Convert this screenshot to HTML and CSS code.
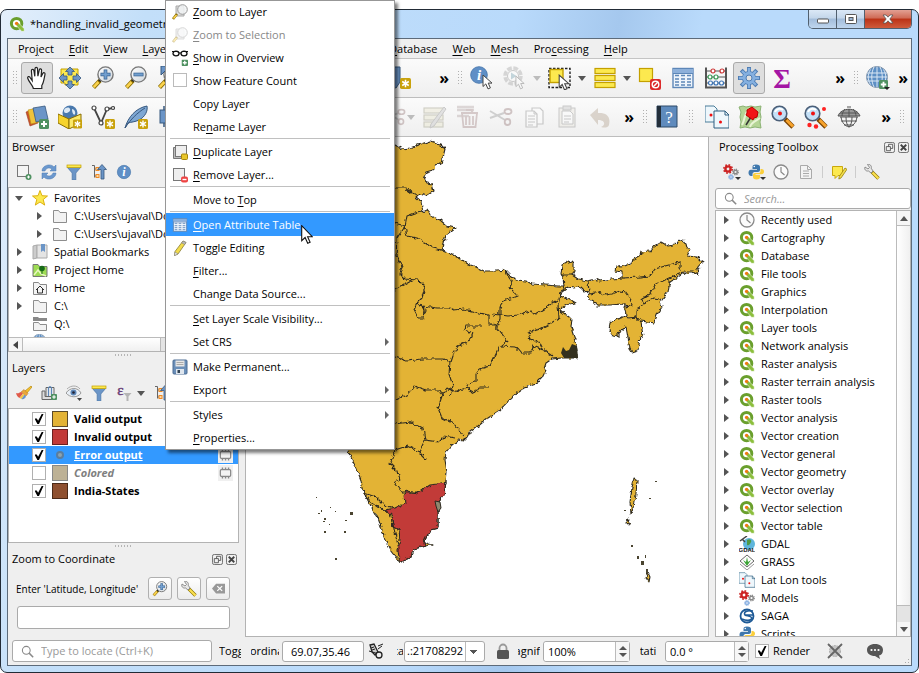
FILE: index.html
```html
<!DOCTYPE html>
<html lang="en">
<head>
<meta charset="utf-8">
<title>*handling_invalid_geometries - QGIS</title>
<link rel="stylesheet" href="styles.css">
</head>
<body>
<svg class="defs" aria-hidden="true">
  <defs>
    <linearGradient id="lens" x1="0" y1="0" x2="1" y2="1"><stop offset="0" stop-color="#fff"/><stop offset="1" stop-color="#cfd6dc"/></linearGradient>
    <filter id="coast" x="-5%" y="-5%" width="110%" height="110%">
      <feTurbulence type="fractalNoise" baseFrequency="0.22" numOctaves="2" seed="4" result="n"/>
      <feDisplacementMap in="SourceGraphic" in2="n" scale="5" xChannelSelector="R" yChannelSelector="G"/>
    </filter>
    <symbol id="q" viewBox="0 0 16 16"><circle cx="7.6" cy="7.6" r="5.2" fill="#fff" stroke="#6a9f2d" stroke-width="3"/><path d="M7.4 6.600l2.200.3 5.600 5.800v2.600h-2.600L7.200 9.400z" fill="#8cbf3d" stroke="#fff" stroke-width=".5"/><circle cx="7.600" cy="7.400" r="1.700" fill="#ee7913"/></symbol>
    <symbol id="newbadge" viewBox="0 0 10 10"><rect width="10" height="10" rx="1.5" fill="#c9a20c"/><path d="M5 1.5v7M2 3.2l6 3.6M8 3.2L2 6.8" stroke="#fff" stroke-width="1.4"/></symbol>
    <symbol id="plusbadge" viewBox="0 0 10 10"><rect width="10" height="10" rx="1.5" fill="#4f9161"/><path d="M5 2v6M2 5h6" stroke="#fff" stroke-width="2"/></symbol>
    <symbol id="arrowcur" viewBox="0 0 12 16"><path d="M1 1v11.5l2.8-2.6 2.2 5 2.4-1-2.2-4.8h3.8z" fill="#fff" stroke="#444" stroke-width="1"/></symbol>

    <symbol id="hand" viewBox="0 0 24 24"><path d="M8.3 22.5c0-2.4-4.5-6.6-5.600-10.200-.5-1.700 1.400-2.400 2.300-1l2.200 3.200-.8-9.700c0-1.800 2.200-1.900 2.500-.2l.9 5.700L10 2.600c.1-1.700 2.400-1.700 2.500 0l.4 7.500 1.400-6.200c.4-1.600 2.500-1.200 2.300.5l-.6 6.700 1.800-3.700c.8-1.300 2.500-.6 2.200.9-.8 3.500-1.200 8.700-3.200 11.200v3z" fill="#fff" stroke="#222" stroke-width="1.200"/></symbol>
    <symbol id="pan" viewBox="0 0 24 24"><path d="M3 3h17v16H7v-2H3z" fill="#fce94f" stroke="#c4a000"/><g fill="#6b95c7" stroke="#37587f" stroke-width=".8"><path d="M12 1l4.500 4.500H14V9h-4V5.500H7.500z"/><path d="M12 23l4.500-4.500H14V15h-4v3.500H7.500z"/><path d="M1 12l4.500-4.500V10H9v4H5.500v2.500z"/><path d="M23 12l-4.500-4.500V10H15v4h3.500v2.500z"/></g></symbol>
    <symbol id="mag" viewBox="0 0 24 24"><path d="M9 14.500L2.500 21.500" stroke="#8a6d00" stroke-width="4.200"/><path d="M7.500 16l-4.800 5.200" stroke="#fbd34d" stroke-width="2.600"/><path d="M10.500 12.500l-2.200 2.600" stroke="#222" stroke-width="3"/><circle cx="14.500" cy="8.500" r="7.600" fill="url(#lens)" stroke="#777" stroke-width="1.400"/></symbol>
    <symbol id="zoomin" viewBox="0 0 24 24"><use href="#mag"/><path d="M14.500 3.500v10M9.500 8.500h10" stroke="#36608f" stroke-width="3.600"/><path d="M14.500 4.200v8.600M10.200 8.500h8.600" stroke="#729fcf" stroke-width="2.200"/></symbol>
    <symbol id="zoomout" viewBox="0 0 24 24"><use href="#mag"/><path d="M9.500 8.500h10" stroke="#36608f" stroke-width="3.600"/><path d="M10.200 8.500h8.600" stroke="#729fcf" stroke-width="2.200"/></symbol>
    <symbol id="zoomfull" viewBox="0 0 24 24"><use href="#mag"/><path d="M4 0h7v5H8l-4 4z" fill="#6b95c7" stroke="#37587f"/></symbol>
    <symbol id="newpoly" viewBox="0 0 24 24"><path d="M-1 1h13v15l-4 6-9-3z" fill="#6b95c7" stroke="#37587f"/><use href="#newbadge" x="12" y="12" width="11" height="11"/></symbol>
    <symbol id="info" viewBox="0 0 24 24"><circle cx="12" cy="12" r="10" fill="#5f8fc6" stroke="#4a78ac"/><text x="12" y="18.500" class="gi">i</text></symbol>
    <symbol id="identify" viewBox="0 0 24 24"><use href="#info" width="20" height="20" x="-1" y="-1"/><use href="#arrowcur" x="12" y="8" width="12" height="16"/></symbol>
    <symbol id="action" viewBox="0 0 24 24"><circle cx="10" cy="10" r="8" fill="#eee" stroke="#999" stroke-width="3.500" stroke-dasharray="4.700 1.600"/><circle cx="10" cy="10" r="5.500" fill="#fff" stroke="#777"/><path d="M8 6.500l5.500 3.500L8 13.500z" fill="#69a"/><use href="#arrowcur" x="12" y="9" width="11" height="15"/></symbol>
    <symbol id="select" viewBox="0 0 24 24"><rect x="1" y="2.500" width="21" height="19" fill="none" stroke="#222" stroke-width="1.400" stroke-dasharray="2.500 1.500"/><rect x="2" y="3.500" width="13" height="13" fill="#fce94f" stroke="#c4a000" stroke-width="1.400"/><use href="#arrowcur" x="10" y="8" width="13" height="17"/></symbol>
    <symbol id="bars" viewBox="0 0 24 24"><g fill="#fce94f" stroke="#c4a000" stroke-width="1.200"><rect x="2" y="2.500" width="20" height="5"/><rect x="2" y="9.500" width="20" height="5"/><rect x="2" y="16.500" width="20" height="5"/></g></symbol>
    <symbol id="deselect" viewBox="0 0 24 24"><rect x="1.500" y="2.500" width="13" height="13" fill="#fce94f" stroke="#c4a000" stroke-width="1.200"/><rect x="12" y="13" width="11" height="11" rx="2" fill="#dc2a2a"/><circle cx="17.500" cy="18.500" r="3.300" fill="none" stroke="#fff" stroke-width="1.400"/><path d="M15.300 20.700l4.400-4.400" stroke="#fff" stroke-width="1.400"/></symbol>
    <symbol id="table" viewBox="0 0 24 24"><rect x="2" y="2.500" width="20" height="19" fill="#eef4fb" stroke="#5d87b8" stroke-width="1.400"/><path d="M2 5h20" stroke="#8db0da" stroke-width="4"/><path d="M4 9.500h4M10 9.500h4M16 9.500h4M4 13h4M10 13h4M16 13h4M4 16h4M10 16h4M16 16h4M4 19h4M10 19h4M16 19h4" stroke="#5d87b8" stroke-width="1.300"/><path d="M2 7.500h20" stroke="#5d87b8"/></symbol>
    <symbol id="abacus" viewBox="0 0 24 24"><path d="M2 1.500v20M22 1.500v20M1 21.500h22" stroke="#555" stroke-width="2"/><path d="M2 5h20M2 11h20M2 17h20" stroke="#555"/><g stroke-width="1.200" fill="#fff"><g stroke="#c33"><circle cx="9" cy="5" r="2"/><circle cx="18" cy="5" r="2"/></g><g stroke="#3a9a55"><circle cx="6" cy="11" r="2"/><circle cx="12" cy="11" r="2"/></g><g stroke="#3d74b5"><circle cx="6.500" cy="17" r="2"/><circle cx="12" cy="17" r="2"/><circle cx="17.500" cy="17" r="2"/></g></g></symbol>
    <symbol id="gear" viewBox="0 0 24 24"><path d="M12 1v22M1 12h22M4.200 4.200l15.600 15.600M19.800 4.200L4.200 19.800" stroke="#4f7db3" stroke-width="4"/><circle cx="12" cy="12" r="7" fill="#4f7db3"/><path d="M12 2v20M2 12h20M5 5l14 14M19 5L5 19" stroke="#85b0e0" stroke-width="2.400"/><circle cx="12" cy="12" r="6.200" fill="#85b0e0"/><circle cx="12" cy="12" r="3" fill="#e2e2e2" stroke="#4f7db3"/></symbol>
    <symbol id="sigma" viewBox="0 0 24 24"><text x="12" y="21.500" class="gs">Σ</text></symbol>
    <symbol id="globe" viewBox="0 0 24 24"><circle cx="11" cy="11" r="10.500" fill="#5d8fc4" stroke="#7b8fa5"/><path d="M11 .5v21M4.500 3.500c-3 5-3 10 0 15M17.500 3.500c3 5 3 10 0 15M8 1c-3 6-3 14 0 20M14 1c3 6 3 14 0 20M1 7h20M1 15h20M.5 11h21" fill="none" stroke="#d9e6f4" stroke-width="1"/></symbol>
    <symbol id="globeadd" viewBox="0 0 24 24"><use href="#globe"/><use href="#plusbadge" x="13" y="14" width="9" height="9"/><path d="M18 21h6l-3 3z" fill="#222"/></symbol>

    <symbol id="datasrc" viewBox="0 0 24 24"><path d="M1 7l9-3 3 14-8 3z" fill="#c9522b" stroke="#a13f1c" stroke-width=".6"/><path d="M3 5l9-2 2 14-8 2z" fill="#f0c33b" stroke="#b98f10" stroke-width=".6"/><path d="M8 3l12-2 3 13-12 3z" fill="#6b95c7" stroke="#37587f" stroke-width=".8"/><use href="#plusbadge" x="14" y="14" width="10" height="10"/></symbol>
    <symbol id="geopkg" viewBox="0 0 24 24"><circle cx="12" cy="8" r="7.500" fill="#4a79ad"/><path d="M6 5c2-3 5-3 6-1s-2 4-4 4-2-1-2-3M14 4c2 0 4 3 3 5s-3-1-3-5" fill="#dce9f5"/><path d="M0 9l11 5v10L0 18z" fill="#f6d32d" stroke="#8a6d00"/><path d="M11 14l12-5v9l-12 6z" fill="#fbe96a" stroke="#8a6d00"/><use href="#newbadge" x="15" y="14" width="9" height="10"/></symbol>
    <symbol id="vnode" viewBox="0 0 24 24"><path d="M3 3l7 15L16 4l6-1" fill="none" stroke="#444" stroke-width="1.800"/><g fill="#fff" stroke="#444" stroke-width="1.200"><circle cx="3" cy="3" r="2"/><circle cx="10" cy="18" r="2"/><circle cx="16" cy="4" r="2"/><circle cx="22" cy="3" r="1.500"/></g><use href="#newbadge" x="14" y="14" width="10" height="10"/></symbol>
    <symbol id="feather" viewBox="0 0 24 24"><path d="M1 23C4 12 12 3 23 1c1 5-2 11-8 14-4 2-8 2-11 3z" fill="#7ea7d3" stroke="#37587f"/><path d="M1 23C7 14 13 8 21 3" stroke="#37587f" fill="none"/><use href="#newbadge" x="14" y="14" width="10" height="10"/></symbol>
    <symbol id="memlayer" viewBox="0 0 24 24"><rect x="3" y="5" width="16" height="13" fill="#6b95c7" stroke="#37587f"/><path d="M7 5V1M12 5V1M17 5V1M7 22v-4M12 22v-4" stroke="#37587f" stroke-width="1.500"/></symbol>
    <symbol id="editbars" viewBox="0 0 24 24"><g fill="#e6e3c4" stroke="#8d8a70" stroke-width="1.200"><rect x="1" y="3" width="19" height="5"/><rect x="1" y="10" width="19" height="5"/><rect x="1" y="17" width="19" height="5"/></g><path d="M21 2l2 2L11 21l-4 2 1-4z" fill="#bbb" stroke="#777"/></symbol>
    <symbol id="trash" viewBox="0 0 24 24"><path d="M1 5h17M1 11h12M1 2h17" stroke="#a99" stroke-width="2.500" fill="none"/><path d="M5 8h17M6 8l1.500 14h12L21 8M10 5h6v3M10 11v9M13.500 11v9M17 11v9" fill="none" stroke="#977" stroke-width="1.800"/></symbol>
    <symbol id="cut" viewBox="0 0 24 24"><path d="M1 6l15 9M1 13l14-5" stroke="#888" stroke-width="2"/><ellipse cx="19" cy="6.500" rx="3.500" ry="2.500" fill="none" stroke="#866" stroke-width="1.800"/><ellipse cx="18.500" cy="17" rx="2.800" ry="3" fill="none" stroke="#866" stroke-width="1.800"/></symbol>
    <symbol id="copy" viewBox="0 0 24 24"><g fill="#fff" stroke="#777" stroke-width="1.200"><path d="M10 3h8l3 3v13H10z"/><path d="M4 6h8l3 3v13H4z"/></g><path d="M6 11h7M6 14h7M6 17h7M6 20h5M12 6v3h3" stroke="#777" fill="none"/></symbol>
    <symbol id="paste" viewBox="0 0 24 24"><rect x="4" y="3" width="16" height="19" fill="#e6e3d8" stroke="#777"/><path d="M7 6h8l3 3v10H7z" fill="#fff" stroke="#777"/><rect x="8" y="1" width="8" height="4" fill="#bbb" stroke="#777"/><path d="M9 11h7M9 14h7M9 17h5" stroke="#777"/></symbol>
    <symbol id="undo" viewBox="0 0 24 24"><path d="M2 10l8-7v5c8-.5 13 3 11 12-1 3-5 3-8 2 5-2 4-7-3-7v5z" fill="#a9957f"/></symbol>
    <symbol id="help" viewBox="0 0 24 24"><path d="M2 1h20v21H2z" fill="#5f8bbd" stroke="#2f4a68"/><path d="M2 1h4v21H2z" fill="#232f3b"/><text x="14" y="17.500" class="gq">?</text></symbol>
    <symbol id="latlon" viewBox="0 0 24 24"><path d="M0 1h9l3 3v13H0z" fill="#eef7fc" stroke="#4a7d99"/><path d="M9 6h11l4 4v13H9z" fill="#eef7fc" stroke="#2e5f80"/><path d="M20 6v4h4" fill="none" stroke="#2e5f80"/><circle cx="6" cy="10" r="1.500" fill="#e11"/><circle cx="15.500" cy="17" r="1.500" fill="#e11"/></symbol>
    <symbol id="mappin" viewBox="0 0 24 24"><path d="M1 2l4-1 3 1 5-1 4 1 6-1-1 6 1 5-1 5 1 6-6-1-5 1-5-1-5 1 1-6-1-5 1-5z" fill="#b5d596" stroke="#8cb374"/><path d="M4 20c4-7 1-10 7-16M12 22c1-5 6-6 10-9" stroke="#e9f5d5" stroke-width="2" fill="none"/><path d="M8 20l5-8" stroke="#333" stroke-width="1.500"/><path d="M9 5l5-3 6 5-1 5-3 1-1 2-7-5 1-2z" fill="#f21616" stroke="#b00"/></symbol>
    <symbol id="magred" viewBox="0 0 24 24"><path d="M14 14l8 8" stroke="#7a4300" stroke-width="4.600"/><path d="M15.500 15l6.500 6.500" stroke="#f7a32c" stroke-width="3"/><circle cx="8.500" cy="8.500" r="7.300" fill="#c4e0f7" stroke="#4b5f78" stroke-width="1.600"/><path d="M4 7a5 5 0 0 1 8-2" stroke="#fff" stroke-width="2" fill="none"/><circle cx="9" cy="8.500" r="2" fill="#e11"/></symbol>
    <symbol id="magreds" viewBox="0 0 24 24"><use href="#magred"/><g fill="#f22"><circle cx="20" cy="4" r="2"/><circle cx="5.500" cy="20" r="2.200"/><circle cx="12" cy="21.500" r="2.200"/></g></symbol>
    <symbol id="globegrey" viewBox="0 0 24 24"><path d="M1 11C4 2 20 2 23 11z" fill="#999" stroke="#555"/><path d="M3 12h18M4 16h16M7 20h10M4 12c1 6 4 9 8 10 4-1 7-4 8-10M9 12c0 5 1 8 3 10 2-2 3-5 3-10M3 8h18M8 4c-2 2-3 5-3 7M12 4v8M16 4c2 2 3 5 3 7M10 2h4" fill="none" stroke="#555"/></symbol>

    <symbol id="addlayer" viewBox="0 0 16 16"><rect x="1.500" y="1.500" width="11" height="11" fill="#f4f4f4" stroke="#777"/><circle cx="12.500" cy="13" r="3" fill="#4f9161"/><path d="M12.500 11.500v3M11 13h3" stroke="#fff"/></symbol>
    <symbol id="refresh" viewBox="0 0 16 16"><path d="M1 7c0-6 9-8 12-4l2-2v6H9l2-2C8 3 5 4 4 7zM15 9c0 6-9 8-12 4l-2 2V9h6l-2 2c3 2 6 1 7-2z" fill="#6b98ce" stroke="#4878b0" stroke-width=".5"/></symbol>
    <symbol id="filter" viewBox="0 0 16 16"><path d="M1 3h14L9.800 9v7H6.200V9z" fill="#6b95c7" stroke="#4d79ab" stroke-width=".8"/><rect x="1" y="1" width="14" height="2.600" fill="#fce94f" stroke="#c4a000" stroke-width=".7"/></symbol>
    <symbol id="collapse" viewBox="0 0 16 16"><path d="M1 1.500h2.500v12M3.500 5h2M3.500 12h2" stroke="#666" fill="none"/><rect x="5" y="3.500" width="3" height="3" fill="#fbd9a6" stroke="#f08a24"/><rect x="5" y="10.500" width="3" height="3" fill="#fbd9a6" stroke="#f08a24"/><path d="M11 .5l4.500 5h-2.500V15h-3V5.500H6.500z" fill="#6b95c7" stroke="#37587f" stroke-width=".8"/></symbol>
    <symbol id="star" viewBox="0 0 16 16"><path d="M8 .5l2 5.200 5.500.3-4.300 3.500 1.500 5.600L8 12l-4.700 3.100 1.500-5.600L.5 6 6 5.700z" fill="#fce94f" stroke="#d9a900" stroke-width=".9"/></symbol>
    <symbol id="folder" viewBox="0 0 16 16"><path d="M1.500 14.500v-12h5l1.500 2h6.500v10z" fill="#f2f2f2" stroke="#8d8d8d"/></symbol>
    <symbol id="drive" viewBox="0 0 16 16"><path d="M1 1h5l1 1h8v3H1z" fill="#888"/><path d="M1.500 14.500v-8h5l1.500 2h6.500v6z" fill="#f2f2f2" stroke="#8d8d8d"/></symbol>
    <symbol id="bookmark" viewBox="0 0 16 16"><path d="M1 2l4-1v13l-4 1z" fill="#ccc" stroke="#aaa"/><path d="M5 1h10v13H5z" fill="#e4e4e4" stroke="#aaa"/><path d="M9 0h4v8l-2-1.500L9 8z" fill="#6b95c7"/></symbol>
    <symbol id="prjhome" viewBox="0 0 16 16"><path d="M1 14.500v-12h5l1.500 2H15v10z" fill="#9edc54" stroke="#777"/><path d="M2 13l4-5 3 4 5 2" stroke="#e9f6c0" fill="none" stroke-width="1.500"/><circle cx="10" cy="6.500" r="2.800" fill="#176b17"/><path d="M10 8v4" stroke="#176b17"/></symbol>
    <symbol id="home" viewBox="0 0 16 16"><path d="M1.500 14.500v-12h5l1.500 2h6.500v10z" fill="#f4f4f4" stroke="#888"/><path d="M4 10l4-4 4 4M5.500 9v4h5V9" fill="none" stroke="#333"/></symbol>
    <symbol id="brush" viewBox="0 0 16 16"><path d="M15 1l1 1-5 6-2-2z" fill="#f7c32c" stroke="#a77900" stroke-width=".6"/><path d="M8 4.500l4 4-2 2.500-5-4z" fill="#e9a63a" stroke="#b9742a" stroke-width=".5"/><path d="M0 8c2 1 3.500-.5 5-1l2 1.800-3.500 4.200C2 12.500.5 10.500 0 8z" fill="#e05a4a"/><path d="M3.500 13L7 8.800l1.500 1L5.500 14z" fill="#f1c744"/><path d="M5.500 14l3-4.200L10 11c-.5 2-2.500 4-4.500 3z" fill="#6b95c7"/></symbol>
    <symbol id="addgroup" viewBox="0 0 16 16"><path d="M5 2.500h8v9H5z" fill="#eee" stroke="#666"/><path d="M1 14.500V6h3v5.500h8v3z" fill="#ddd" stroke="#666"/><path d="M7.500 11V3q1.500-3 3 0v8" stroke="#5d87b8" fill="none" stroke-width="1.200"/><use href="#plusbadge" x="10" y="9" width="6" height="6"/></symbol>
    <symbol id="eye" viewBox="0 0 16 16"><path d="M0 8c4-6 12-6 15 0-3 5-11 5-15 0z" fill="#e8eef5" stroke="#999"/><circle cx="7.500" cy="7.500" r="3" fill="#5d87b8"/><circle cx="7.500" cy="7.500" r="1.300" fill="#223"/><path d="M1 4c4-4 10-4 13 0" stroke="#aaa" fill="none"/><path d="M11 13h5l-2.500 3z" fill="#444"/></symbol>
    <symbol id="eps" viewBox="0 0 16 16"><text x="4.500" y="9.500" class="ge">ε</text><path d="M7.500 8h8l-3 3.500V16h-2v-4.500z" fill="#b5b5b5"/></symbol>
    <symbol id="gears" viewBox="0 0 16 16"><circle cx="5" cy="5" r="2.600" fill="none" stroke="#c22" stroke-width="2.400"/><circle cx="5" cy="5" r="4.200" fill="none" stroke="#c22" stroke-width="1.600" stroke-dasharray="1.700 1.600"/><circle cx="12.500" cy="8" r="1.800" fill="none" stroke="#888" stroke-width="1.400"/><circle cx="12.500" cy="8" r="2.800" fill="none" stroke="#888" stroke-width="1.200" stroke-dasharray="1.200 1"/><circle cx="8" cy="13" r="1.500" fill="none" stroke="#8fb4e3" stroke-width="1.500"/><circle cx="8" cy="13" r="2.500" fill="none" stroke="#8fb4e3" stroke-dasharray="1.200 .8"/></symbol>
    <symbol id="python" viewBox="0 0 16 16"><path d="M8 .5c-3 0-3.500 1-3.500 2.500V5H9v.8H3C1 5.800.5 7.500.5 9s1 3 2.500 3h1.500v-2C4.500 8.500 6 8 7 8h3c1.200 0 2-.8 2-2V3C12 1.500 11 .5 8 .5z" fill="#3f78ad"/><path d="M8.500 15.500c3 0 3.500-1 3.500-2.500V11H7.500v-.8h6c2 0 2.500-1.200 2.500-2.700S15 5 13.500 5h-1v2c0 1.500-1 2-2 2H7c-1.200 0-2 .8-2 2v2c0 1.500 1 2.500 3.500 2.500z" fill="#fbcf3c"/><circle cx="6.300" cy="2.500" r=".8" fill="#fff"/></symbol>
    <symbol id="clock" viewBox="0 0 16 16"><circle cx="8" cy="8" r="7" fill="#fbfbfb" stroke="#8a8a8a" stroke-width="1.300"/><path d="M8 3v5l3.500 3" fill="none" stroke="#888" stroke-width="1.200"/></symbol>
    <symbol id="doc" viewBox="0 0 16 16"><path d="M2.500 1.500h7l4 4v9h-11z" fill="#f3f3f3" stroke="#aaa"/><path d="M5 7h6M5 9.500h6M5 12h6M9.500 1.500v4h4" stroke="#aaa" fill="none"/></symbol>
    <symbol id="note" viewBox="0 0 16 16"><path d="M1.500 2.500h10v9H7l-3 3v-3H1.500z" fill="#fce94f" stroke="#c9a70c"/><path d="M14 4l2 1.300-6 8.700-2.200 1 .4-2.400z" fill="#f2dc4a" stroke="#8b7500" stroke-width=".7"/></symbol>
    <symbol id="wrench" viewBox="0 0 16 16"><path d="M8 8l6.500 6.500" stroke="#8b7500" stroke-width="3.400"/><path d="M8.500 8.500l6 6" stroke="#fbe04f" stroke-width="2.200"/><path d="M1 3l3 2 1.500-1.500L3.500.5C6-.2 8 2 7.200 4.200L9 7 7 9 4.500 7C2 7.500 0 5.500 1 3z" fill="#e7e7e7" stroke="#777" stroke-width=".8"/></symbol>
    <symbol id="search" viewBox="0 0 16 16"><circle cx="6.500" cy="6.500" r="4.800" fill="none" stroke="#888" stroke-width="1.300"/><path d="M10 10l5 5" stroke="#888" stroke-width="1.800"/></symbol>
    <symbol id="gdal" viewBox="0 0 16 16"><circle cx="10" cy="8" r="6" fill="#5fb6dc"/><path d="M8 4c3-2 5 0 4 2s-2 4-4 3z" fill="#4f9a45"/><path d="M1 5l7-5M3 3l3 3" stroke="#444" stroke-width="1.500"/><text x="8" y="16" class="gd">GDAL</text></symbol>
    <symbol id="grass" viewBox="0 0 16 16"><path d="M8 1l7 6-7 6-7-6z" fill="#fff" stroke="#666"/><path d="M1 10l7 6 7-6" fill="none" stroke="#999"/><path d="M8 12L4 6l3 2 1-5 1 5 3-2z" fill="#3aa335"/></symbol>
    <symbol id="saga" viewBox="0 0 16 16"><circle cx="8" cy="8" r="6.500" fill="#fff" stroke="#1e5a96" stroke-width="1.800"/><path d="M14 3C8 2 4 4 6 7c2 1 6 1 7 3-1 3-6 3-10 1M6 7h9" fill="none" stroke="#1e5a96" stroke-width="1.600"/></symbol>
    <symbol id="chip" viewBox="0 0 16 16"><rect x="2.500" y="4.500" width="11" height="7" rx="1" fill="#f3f3f3" stroke="#888" stroke-width="1.300"/><path d="M4 3h1.500M7.300 3h1.500M10.500 3H12M4 13h1.500M7.300 13h1.500M10.500 13H12" stroke="#888" stroke-width="1.800"/></symbol>
    <symbol id="zlayer" viewBox="0 0 16 16"><path d="M4 2h7l1 2v8H4z" fill="#ddd" stroke="#aaa"/><path d="M5 10l-4 5" stroke="#8a6d00" stroke-width="2.600"/><path d="M4.500 11l-3 3.500" stroke="#fbd34d" stroke-width="1.600"/><circle cx="10.500" cy="5.500" r="4.800" fill="#f1f3f4" fill-opacity=".85" stroke="#999"/></symbol>
    <symbol id="glasses" viewBox="0 0 16 16"><ellipse cx="4" cy="3.500" rx="3" ry="2.300" fill="none" stroke="#111" stroke-width="1.300"/><ellipse cx="12" cy="3.500" rx="3" ry="2.300" fill="none" stroke="#111" stroke-width="1.300"/><path d="M0 1.500h5M11 1.500h5M7 3h2" fill="none" stroke="#111" stroke-width="1.200"/><use href="#plusbadge" x="9.500" y="9.500" width="6.500" height="6.500"/></symbol>
    <symbol id="dup" viewBox="0 0 16 16"><path d="M1.500 14.500V3.500h10v11z" fill="#bbb" stroke="#777"/><rect x="3.500" y="1.500" width="11" height="11" fill="#eee" stroke="#777"/><rect x="9.500" y="10" width="6" height="5.500" rx="1" fill="#e8c52a" stroke="#a8860a"/></symbol>
    <symbol id="remove" viewBox="0 0 16 16"><rect x="1.500" y="1.500" width="11" height="12" fill="#eee" stroke="#777"/><rect x="9" y="9.500" width="7" height="6" rx="2" fill="#e44"/><path d="M10.500 12.500h4" stroke="#fff" stroke-width="1.400"/></symbol>
    <symbol id="pencil" viewBox="0 0 16 16"><path d="M11 1l3 1.500L6 14l-3.500 1.500.5-4z" fill="#f2dc4a" stroke="#8a7d3a" stroke-width=".8"/><path d="M11 1l3 1.500-1.300 2-3-1.600z" fill="#bbb" stroke="#777" stroke-width=".5"/><path d="M3 12l-.5 3.500L6 14z" fill="#eee" stroke="#777" stroke-width=".5"/></symbol>
    <symbol id="save" viewBox="0 0 16 16"><rect x="1" y="1" width="14" height="14" rx="1" fill="#6b8fb9" stroke="#4c6d94"/><rect x="3.500" y="1.500" width="9" height="6" fill="#e6e6e6"/><path d="M4.500 3.500h7M4.500 5.500h7" stroke="#aaa"/><rect x="4" y="10" width="8" height="5" fill="#dfe6ee"/><rect x="5.500" y="11" width="2.500" height="3" fill="#345"/></symbol>
    <symbol id="float" viewBox="0 0 12 12"><rect x=".5" y=".5" width="11" height="11" rx="2" fill="#f0f0f0" stroke="#666"/><path d="M5 5V2.500h4.500V7H7.500M2.500 5h4.500v4.500H2.500z" fill="none" stroke="#555"/></symbol>
    <symbol id="close" viewBox="0 0 12 12"><rect x=".5" y=".5" width="11" height="11" rx="2" fill="#f0f0f0" stroke="#666"/><path d="M3 3l6 6M9 3L3 9" stroke="#444" stroke-width="2"/></symbol>
    <symbol id="clear" viewBox="0 0 16 16"><path d="M5 2h11v12H5L0 8z" fill="#999"/><path d="M6.500 5l6 6M12.500 5l-6 6" stroke="#fff" stroke-width="1.500"/></symbol>
    <symbol id="extents" viewBox="0 0 16 16"><path d="M2 2l4-1 4 8-3 3-3-3z" fill="#ccc" stroke="#222" stroke-width="1.300"/><path d="M3 5l3-1M4 7l3-1M10 3l5-2M10 6l4-3M1 8l13 4" stroke="#222"/><circle cx="11" cy="12" r="3" fill="#eee" stroke="#222" stroke-width="1.300"/></symbol>
    <symbol id="lock" viewBox="0 0 16 16"><path d="M4.500 8V5a3.500 3.500 0 0 1 7 0v3" fill="none" stroke="#999" stroke-width="1.800"/><rect x="2" y="7" width="12" height="9" rx="1.500" fill="#555"/></symbol>
    <symbol id="crs" viewBox="0 0 16 16"><circle cx="8" cy="8" r="5.500" fill="#c4c4c4" stroke="#aaa" stroke-dasharray="2 1"/><path d="M1 1l14 14M15 1L1 15" stroke="#666" stroke-width="1.800"/></symbol>
    <symbol id="bubble" viewBox="0 0 16 16"><path d="M8 1c5 0 8 2.500 8 6s-2 5-4 5.500l1 3.500-5-3c-5 0-8-2.500-8-6s3-6 8-6z" fill="#555"/><g fill="#fff"><circle cx="4.500" cy="7" r="1.100"/><circle cx="8" cy="7" r="1.100"/><circle cx="11.500" cy="7" r="1.100"/></g></symbol>
  </defs>
</svg>

<div class="window">
  <header class="titlebar">
    <svg class="i16"><use href="#q"/></svg>
    <h1>*handling_invalid_geometries - QGIS</h1>
    <div class="winctl">
      <button aria-label="Minimize"><svg viewBox="0 0 12 12"><rect x=".5" y="6" width="11" height="4" rx="1" fill="#fff" stroke="#555"/></svg></button>
      <button aria-label="Maximize"><svg viewBox="0 0 12 12"><rect x=".5" y="1.500" width="11" height="9" rx="1" fill="#fff" stroke="#555"/><rect x="4" y="4.500" width="4" height="3" fill="#9bb7d6" stroke="#555"/></svg></button>
      <button class="x" aria-label="Close"><svg viewBox="0 0 12 12"><path d="M1 2h3l2 2.200L8 2h3L7.800 6 11 10H8L6 7.800 4 10H1l3.200-4z" fill="#fff" stroke="#555" stroke-width=".8"/></svg></button>
    </div>
  </header>

  <div class="client">
    <nav class="menubar">
      <a href="#">Pro<u>j</u>ect</a><a href="#"><u>E</u>dit</a><a href="#"><u>V</u>iew</a><a href="#"><u>L</u>ayer</a><a href="#"><u>S</u>ettings</a><a href="#"><u>P</u>lugins</a><a href="#">Vect<u>o</u>r</a><a href="#"><u>R</u>aster</a><a href="#"><u>D</u>atabase</a><a href="#"><u>W</u>eb</a><a href="#"><u>M</u>esh</a><a href="#">Pro<u>c</u>essing</a><a href="#"><u>H</u>elp</a>
    </nav>

    <div class="toolbar">
      <i class="grip"></i>
      <button class="tb on" aria-label="Pan Map"><svg><use href="#hand"/></svg></button>
      <button class="tb" aria-label="Pan to Selection"><svg><use href="#pan"/></svg></button>
      <button class="tb" aria-label="Zoom In"><svg><use href="#zoomin"/></svg></button>
      <button class="tb" aria-label="Zoom Out"><svg><use href="#zoomout"/></svg></button>
      <button class="tb" aria-label="Zoom Full"><svg><use href="#zoomfull"/></svg></button>
      <button class="tb" aria-label="Zoom to Selection"><svg><use href="#mag"/></svg></button>
      <button class="tb" aria-label="Zoom to Layer"><svg><use href="#mag"/></svg></button>
      <button class="tb" aria-label="Zoom to Native Resolution"><svg><use href="#mag"/></svg></button>
      <button class="tb" aria-label="Zoom Last"><svg><use href="#mag"/></svg></button>
      <button class="tb" aria-label="Zoom Next"><svg><use href="#mag"/></svg></button>
      <button class="tb" aria-label="New Map View"><svg><use href="#mag"/></svg></button>
      <button class="tb" aria-label="New Bookmark"><svg><use href="#newpoly"/></svg></button>
      <button class="ext">»</button>
      <i class="grip"></i>
      <button class="tb" aria-label="Identify Features"><svg><use href="#identify"/></svg></button>
      <button class="tb drop" aria-label="Run Action" disabled><svg><use href="#action"/></svg></button>
      <button class="tb drop" aria-label="Select Features"><svg><use href="#select"/></svg></button>
      <button class="tb drop" aria-label="Select by Value"><svg><use href="#bars"/></svg></button>
      <button class="tb" aria-label="Deselect"><svg><use href="#deselect"/></svg></button>
      <button class="tb" aria-label="Attribute Table"><svg><use href="#table"/></svg></button>
      <button class="tb" aria-label="Field Calculator"><svg><use href="#abacus"/></svg></button>
      <button class="tb on" aria-label="Toolbox"><svg><use href="#gear"/></svg></button>
      <button class="tb" aria-label="Statistics"><svg><use href="#sigma"/></svg></button>
      <button class="ext grow">»</button>
      <i class="grip"></i>
      <button class="tb" aria-label="Add Web Layer"><svg><use href="#globeadd"/></svg></button>
      <button class="ext end">»</button>
    </div>

    <div class="toolbar">
      <i class="grip"></i>
      <button class="tb" aria-label="Data Source Manager"><svg><use href="#datasrc"/></svg></button>
      <button class="tb" aria-label="New GeoPackage Layer"><svg><use href="#geopkg"/></svg></button>
      <button class="tb" aria-label="New Shapefile Layer"><svg><use href="#vnode"/></svg></button>
      <button class="tb" aria-label="New SpatiaLite Layer"><svg><use href="#feather"/></svg></button>
      <button class="tb" aria-label="New Scratch Layer"><svg><use href="#memlayer"/></svg></button>
      <button class="tb" aria-label="New Virtual Layer"><svg><use href="#memlayer"/></svg></button>
      <button class="tb" aria-label="Current Edits"><svg><use href="#pencil"/></svg></button>
      <button class="tb" aria-label="Toggle Editing"><svg><use href="#pencil"/></svg></button>
      <button class="tb" aria-label="Save Edits"><svg><use href="#save"/></svg></button>
      <button class="tb" aria-label="Add Feature"><svg><use href="#vnode"/></svg></button>
      <button class="tb" aria-label="Move Feature"><svg><use href="#vnode"/></svg></button>
      <button class="tb drop small" aria-label="Vertex Tool" disabled><svg><use href="#cut"/></svg></button>
      <button class="tb" aria-label="Modify Attributes" disabled><svg><use href="#editbars"/></svg></button>
      <button class="tb" aria-label="Delete Selected" disabled><svg><use href="#trash"/></svg></button>
      <button class="tb" aria-label="Cut" disabled><svg><use href="#cut"/></svg></button>
      <button class="tb" aria-label="Copy" disabled><svg><use href="#copy"/></svg></button>
      <button class="tb" aria-label="Paste" disabled><svg><use href="#paste"/></svg></button>
      <button class="tb" aria-label="Undo" disabled><svg><use href="#undo"/></svg></button>
      <button class="ext mid">»</button>
      <i class="grip"></i>
      <button class="tb" aria-label="Help"><svg><use href="#help"/></svg></button>
      <i class="grip wide"></i>
      <button class="tb" aria-label="Copy Coordinates"><svg><use href="#latlon"/></svg></button>
      <button class="tb" aria-label="External Map"><svg><use href="#mappin"/></svg></button>
      <button class="tb" aria-label="Zoom to Coordinate"><svg><use href="#magred"/></svg></button>
      <button class="tb" aria-label="Multi Zoom"><svg><use href="#magreds"/></svg></button>
      <button class="tb" aria-label="Projection"><svg><use href="#globegrey"/></svg></button>
      <button class="ext grow">»</button>
      <i class="grip wide"></i>
    </div>

    <div class="main">
      <aside class="left">
        <section class="dock browser">
          <h2>Browser</h2>
          <div class="tools">
            <button aria-label="Add Layer"><svg><use href="#addlayer"/></svg></button><button aria-label="Refresh"><svg><use href="#refresh"/></svg></button><button aria-label="Filter"><svg><use href="#filter"/></svg></button><button aria-label="Collapse All"><svg><use href="#collapse"/></svg></button><button aria-label="Properties"><svg><use href="#info"/></svg></button>
          </div>
          <div class="box">
            <ul class="tree">
              <li><i class="open"></i><svg><use href="#star"/></svg>Favorites</li>
              <li class="sub"><i></i><svg><use href="#folder"/></svg>C:\Users\ujaval\Documents</li>
              <li class="sub"><i></i><svg><use href="#folder"/></svg>C:\Users\ujaval\Downloads</li>
              <li><i></i><svg><use href="#bookmark"/></svg>Spatial Bookmarks</li>
              <li><i></i><svg><use href="#prjhome"/></svg>Project Home</li>
              <li><i></i><svg><use href="#home"/></svg>Home</li>
              <li><i></i><svg><use href="#folder"/></svg>C:\</li>
              <li><i class="none"></i><svg><use href="#drive"/></svg>Q:\</li>
              <li><i class="none"></i><svg><use href="#globe"/></svg></li>
            </ul>
            <div class="hscroll"><button aria-label="Scroll left"></button><span></span></div>
          </div>
        </section>
        <div class="split"></div>
        <section class="dock layers">
          <h2>Layers</h2>
          <div class="tools">
            <button aria-label="Layer Styling"><svg><use href="#brush"/></svg></button><button aria-label="Add Group"><svg><use href="#addgroup"/></svg></button><button aria-label="Map Themes"><svg><use href="#eye"/></svg></button><button aria-label="Filter Legend"><svg><use href="#filter"/></svg></button><button class="menu" aria-label="Filter by Expression"><svg><use href="#eps"/></svg></button><button aria-label="Expand All"><svg><use href="#collapse"/></svg></button>
          </div>
          <div class="box">
            <ul class="layerlist">
              <li><input type="checkbox" id="l1" checked><span class="sw gold"></span><label for="l1">Valid output</label></li>
              <li><input type="checkbox" id="l2" checked><span class="sw red"></span><label for="l2">Invalid output</label></li>
              <li class="sel"><input type="checkbox" id="l3" checked><span class="dot"></span><label for="l3">Error output</label><svg class="chip"><use href="#chip"/></svg></li>
              <li class="off"><input type="checkbox" id="l4"><span class="sw tan"></span><label for="l4">Colored</label><svg class="chip"><use href="#chip"/></svg></li>
              <li><input type="checkbox" id="l5" checked><span class="sw brown"></span><label for="l5">India-States</label></li>
            </ul>
          </div>
        </section>
        <div class="split"></div>
        <section class="dock zoomto">
          <h2>Zoom to Coordinate<span class="dockctl"><button aria-label="Float"><svg><use href="#float"/></svg></button><button aria-label="Close"><svg><use href="#close"/></svg></button></span></h2>
          <div class="coordrow">
            <label for="coord">Enter 'Latitude, Longitude'</label>
            <button aria-label="Zoom"><svg class="i16"><use href="#zoomin"/></svg></button>
            <button aria-label="Settings"><svg class="i16"><use href="#wrench"/></svg></button>
            <button aria-label="Clear"><svg class="i12"><use href="#clear"/></svg></button>
          </div>
          <input id="coord" type="text">
        </section>
      </aside>

      <div class="canvas">
        <svg viewBox="246 137 462 499" role="img" aria-label="Map of India">
          <g filter="url(#coast)" fill="#e3b336" stroke="#2d2a20" stroke-width="1.100" stroke-linejoin="round">
            <path d="M380 150L395 145 402 149 410 148 418 145 430 141 440 144 445 149 443 157 441 163 435 166 433 170 426 172 424 177 427 183 432 184 434 191 426 196 420 194 416 198 421 202 423 212 427 210 431 216 440 220 447 226 455 228 446 235 444 243 442 250 453 255 460 259 468 264 476 267 484 271 497 271 505 270 512 277 517 280 526 281 532 284 545 285 558 286 564 286 563 277 561 274 562 265 566 263 571 261 574 264 574 271 572 275 578 279 588 281 596 279 600 281 612 279 622 278 622 272 615 271 616 265 621 267 631 264 632 260 640 256 641 252 650 251 654 246 661 242 668 246 674 245 678 242 683 240 686 244 687 248 690 250 687 256 697 257 700 260 703 262 698 268 697 270 698 275 693 272 685 272 678 277 670 282 669 286 668 292 662 300 660 303 662 307 658 313 654 323 641 321 643 336 640 337 638 350 632 352 630 349 628 338 626 327 622 330 618 333 618 337 613 336 609 330 610 323 614 320 621 318 626 315 625 308 628 306 622 304 610 305 598 305 589 300 588 291 585 292 581 288 576 287 573 288 568 287 563 291 560 296 568 299 575 303 566 305 562 307 561 311 569 317 572 320 571 325 572 331 575 340 577 350 577 358 562 358 552 359 546 363 544 369 546 371 543 377 537 383 525 387 518 392 512 397 500 410 488 418 478 426 470 432 467 437 463 441 458 440 452 445 446 452 445 460 447 472 446 482 444 495 438 503 438 528 430 530 424 542 432 545 425 546 414 549 412 556 402 562 397 559 390 550 385 540 382 530 378 518 372 508 364 493 361 480 357 470 347 449 335 420 300 330z"/>
            <path fill="#c23a38" d="M446 482L438 484 430 485 418 493 407 491 404 496 405 503 395 508 385 510 391 515 393 527 399 530 400 540 398 550 399 558 402 562 412 556 414 549 425 546 424 542 430 530 438 528 438 503 444 495z"/>
            <path fill="none" d="M395 188L405 188 412 193 417 195M423 212l-8 1-8 3-2 11 2 9 10 2 8 5 8 5 9 2M390 220l8 4 7 2-8 12-1 18 6 10-2 8 5 5 13 1 7 7-3 10-5 5 5 4 15 2 12 0 5 2 10-1 15 4 10 2 0 10 8 0 3-6 0-12 4-6 13-5-4-5-4-3 3-6-4-6-3-6M395 290l18-10M418 301l-4 9 4 8 6 0 1-8-5-5M493 314l15 2 10-1 12-4 6 3 10-6 6-5 5-3M564 286l-4 10-2 8 1 14-11 7-8 4-12 4 2 6 10 4 3 6 10 8M493 323l7 8 7 10-6 5 15 1 5 6 10 0 2-7 10 4M500 346l-10 20-10 3-4 5 0 8-8 2-3 6M482 326l-17 0-1 4 9 3-3 8-12 5-6 10-2 6-1 12 4 12-3 10M395 357l12 4 15-2 22 0 6 3M408 394l6-8 12 4 14 0 2 6"/>
            <path fill="none" d="M442 396l6-8 6 4 12-4 9 5 4-6 10 0M442 396l-4 12 4 10 12 6 10 12M396 400l12-6M395 424l16-2 12 6 2 12-6 12 8 8M425 440l14 2 6-6 10 2M352 440l18 6 10-4 15 8 12-4 12 6M395 450l-5 14 8 8 2 8-6 2 8 10 14 0 2 1M364 493l12 4 8 8 10 3M364 493l6 8 10 7 5 2M391 515l3 14 5 20"/>
            <path fill="none" d="M588 281l1 13 11-2 5 3 7-1 8-3 5 1 6 8 1 5-6 3M622 278l18-1 10-1 5-7 10-3 15-4 0 6 3 4-14 6-14 7-5 9-9 5 3 5 10-6 6 1M669 278l0 8M637 320l0-10 6-7M626 315l2 3 9-1 4 5M561 275l12 0"/>
            <path d="M634 478l3 2-1 14-2 12-3 8-1-12 2-14zM628 519l2 2-2 4-2-2zM648 573l2 4-1 5-3-4z"/>
          </g>
          <path d="M563 347l3 4 3-1 3-6 5 2 1 12-14 0-3-5z" fill="#33301f"/>
          <path d="M435 501l5 1 1 6-3 4-2-6z" fill="#8f876f" stroke="#2d2a20"/>
          <g fill="#4a4430"><path d="M316 497h1v1h-1zM318 513h2v1h-2zM321 510h1v2h-1zM324 518h2v2h-2zM330 507h1v1h-1zM335 511h1v1h-1zM329 524h1v1h-1zM323 521h2v1h-2zM350 512h3v3h-3zM345 520h2v1h-2zM324 531h2v2h-2zM344 531h2v2h-2zM335 558h2v2h-2zM655 481h2v1h-2zM649 498h2v1h-2zM624 510h2v1h-2zM631 545h2v2h-2zM637 556h2v3h-2zM641 561h3v4h-3zM645 555h1v3h-1zM646 569h2v4h-2z"/></g>
        </svg>
      </div>

      <aside class="dock right">
        <h2>Processing Toolbox<span class="dockctl"><button aria-label="Float"><svg><use href="#float"/></svg></button><button aria-label="Close"><svg><use href="#close"/></svg></button></span></h2>
        <div class="tools">
          <button class="sm" aria-label="Models"><svg><use href="#gears"/></svg></button><button class="sm" aria-label="Scripts"><svg><use href="#python"/></svg></button><button aria-label="History"><svg><use href="#clock"/></svg></button><button aria-label="Results"><svg><use href="#doc"/></svg></button><i></i><button aria-label="Edit In-Place"><svg><use href="#note"/></svg></button><i></i><button aria-label="Options"><svg><use href="#wrench"/></svg></button>
        </div>
        <div class="search"><svg class="i12"><use href="#search"/></svg><input type="search" placeholder="Search..." aria-label="Search"></div>
        <div class="box toolbox">
          <ul class="tree">
            <li><i></i><svg><use href="#clock"/></svg>Recently used</li>
            <li><i></i><svg><use href="#q"/></svg>Cartography</li>
            <li><i></i><svg><use href="#q"/></svg>Database</li>
            <li><i></i><svg><use href="#q"/></svg>File tools</li>
            <li><i></i><svg><use href="#q"/></svg>Graphics</li>
            <li><i></i><svg><use href="#q"/></svg>Interpolation</li>
            <li><i></i><svg><use href="#q"/></svg>Layer tools</li>
            <li><i></i><svg><use href="#q"/></svg>Network analysis</li>
            <li><i></i><svg><use href="#q"/></svg>Raster analysis</li>
            <li><i></i><svg><use href="#q"/></svg>Raster terrain analysis</li>
            <li><i></i><svg><use href="#q"/></svg>Raster tools</li>
            <li><i></i><svg><use href="#q"/></svg>Vector analysis</li>
            <li><i></i><svg><use href="#q"/></svg>Vector creation</li>
            <li><i></i><svg><use href="#q"/></svg>Vector general</li>
            <li><i></i><svg><use href="#q"/></svg>Vector geometry</li>
            <li><i></i><svg><use href="#q"/></svg>Vector overlay</li>
            <li><i></i><svg><use href="#q"/></svg>Vector selection</li>
            <li><i></i><svg><use href="#q"/></svg>Vector table</li>
            <li><i></i><svg><use href="#gdal"/></svg>GDAL</li>
            <li><i></i><svg><use href="#grass"/></svg>GRASS</li>
            <li><i></i><svg><use href="#latlon"/></svg>Lat Lon tools</li>
            <li><i></i><svg><use href="#gears"/></svg>Models</li>
            <li><i></i><svg><use href="#saga"/></svg>SAGA</li>
            <li><i></i><svg><use href="#python"/></svg>Scripts</li>
          </ul>
          <div class="vscroll"><button class="up" aria-label="Scroll up"></button><span></span><button class="down" aria-label="Scroll down"></button></div>
        </div>
      </aside>
    </div>

    <footer class="status">
      <div class="search locate"><svg class="i12"><use href="#search"/></svg><input type="search" placeholder="Type to locate (Ctrl+K)" aria-label="Locate"></div>
      <span class="clip togg">Toggle</span>
      <label class="clip coordl" for="xy">Coordinate</label>
      <input class="xy" id="xy" type="text" value="69.07,35.46">
      <button class="plain ex" aria-label="Extents"><svg class="i16"><use href="#extents"/></svg></button>
      <label class="clip scl" for="scale">Scale</label>
      <select id="scale"><option>.:21708292</option></select>
      <button class="plain lk" aria-label="Lock scale"><svg class="i16"><use href="#lock"/></svg></button>
      <label class="clip mgl" for="mag-in">Magnifier</label>
      <span class="spin mg"><input id="mag-in" type="text" value="100%"><b></b></span>
      <label class="clip rotl" for="rot">Rotation</label>
      <span class="spin rt"><input id="rot" type="text" value="0.0 °"><b></b></span>
      <input type="checkbox" id="render" checked><label class="rend" for="render">Render</label>
      <button class="plain cr" aria-label="Projection"><svg class="i16"><use href="#crs"/></svg></button>
      <button class="plain" aria-label="Messages"><svg class="i16"><use href="#bubble"/></svg></button>
      <i class="sizegrip"></i>
    </footer>
  </div>
</div>

<div class="context" role="menu">
  <button role="menuitem"><svg><use href="#zlayer"/></svg><span><u>Z</u>oom to Layer</span></button>
  <button role="menuitem" disabled><svg><use href="#zlayer"/></svg><span><u>Z</u>oom to Selection</span></button>
  <button role="menuitem"><svg><use href="#glasses"/></svg><span><u>S</u>how in Overview</span></button>
  <button role="menuitem"><i class="tick"></i><span>Show Feature Count</span></button>
  <button role="menuitem"><span>Copy Layer</span></button>
  <button role="menuitem"><span>Re<u>n</u>ame Layer</span></button>
  <hr>
  <button role="menuitem"><svg><use href="#dup"/></svg><span><u>D</u>uplicate Layer</span></button>
  <button role="menuitem"><svg><use href="#remove"/></svg><span><u>R</u>emove Layer...</span></button>
  <hr>
  <button role="menuitem"><span>Move to <u>T</u>op</span></button>
  <hr>
  <button role="menuitem" class="hot"><svg><use href="#table"/></svg><span><u>O</u>pen Attribute Table</span></button>
  <button role="menuitem"><svg><use href="#pencil"/></svg><span>Toggle Editing</span></button>
  <button role="menuitem"><span><u>F</u>ilter...</span></button>
  <button role="menuitem"><span>Change Data Source...</span></button>
  <hr>
  <button role="menuitem"><span><u>S</u>et Layer Scale Visibility...</span></button>
  <button role="menuitem" class="more"><span>Set CRS</span></button>
  <hr>
  <button role="menuitem"><svg><use href="#save"/></svg><span>Make Permanent...</span></button>
  <button role="menuitem" class="more"><span>Export</span></button>
  <hr>
  <button role="menuitem" class="more"><span>Styles</span></button>
  <button role="menuitem"><span><u>P</u>roperties...</span></button>
  <svg class="pointer" viewBox="0 0 12 19"><path d="M.7.7v15l3.400-3.200 2.600 5.800 2.400-1-2.500-5.600h4.700z" fill="#fff" stroke="#111" stroke-width="1.100"/></svg>
</div>
</body>
</html>
```
FILE: styles.css
```css
* { box-sizing: border-box; }
html, body { height: 100%; margin: 0; }
body {
  position: relative; display: flex; flex-direction: column; overflow: hidden;
  padding-top: 9px; background: #fff; color: #000;
  font: 11px/18px "Open Sans", "Noto Sans", sans-serif;
}
button, input, select { font: inherit; color: inherit; margin: 0; }
button { padding: 0; border: 0; background: none; }
a { color: inherit; text-decoration: none; }
u { text-underline-offset: 2px; }
ul { list-style: none; margin: 0; padding: 0; }
svg { display: block; flex: none; }
.defs { position: absolute; width: 0; height: 0; }
.i16 { width: 16px; height: 16px; }
.i12 { width: 13px; height: 13px; }
.gi { font: italic 700 18px "Liberation Serif", serif; fill: #fff; text-anchor: middle; }
.gs { font: 700 27px "Liberation Serif", serif; fill: #a416a4; text-anchor: middle; }
.gq { font: 17px "Liberation Serif", serif; fill: #fff; text-anchor: middle; }
.ge { font: 15px "Liberation Serif", serif; fill: #6a3f78; stroke: #6a3f78; stroke-width: .5px; text-anchor: middle; }
.gd { font: 700 6px "Liberation Sans", sans-serif; fill: #111; text-anchor: middle; }

.window {
  flex: 1; min-height: 0; display: flex; flex-direction: column;
  padding: 0 6px 6px; border: 1px solid #222b36; border-radius: 7px;
  background: linear-gradient(100deg, #e4effb 0, #c3dff9 14%, #b9dafb 50%, #a5c8ee 60%, #b9dafb 68%, #b9dafb 100%);
}
.titlebar { height: 28px; flex: none; display: flex; align-items: center; gap: 5px; padding-left: 2px; }
.titlebar h1 { flex: 1; margin: 0; font-size: 11px; font-weight: 400; }
.winctl { display: flex; align-self: flex-start; height: 19px; border: 1px solid #51606f; border-top: 0; border-radius: 0 0 5px 5px; overflow: hidden; }
.winctl button { width: 28px; display: grid; place-items: center; border-right: 1px solid #51606f; background: linear-gradient(#dbe8f6, #c3d6ea 45%, #a3bddb 50%, #bfd6ee); }
.winctl .x { width: 46px; border-right: 0; background: linear-gradient(#e2a093, #cf6a55 45%, #bb3216 50%, #cf5b3c); }
.winctl svg { width: 12px; height: 12px; }

.client { flex: 1; min-height: 0; display: flex; flex-direction: column; border: 1px solid #5d6b7a; background: #efefef; }
.menubar { height: 20px; flex: none; display: flex; gap: 15px; padding-left: 10px; border-bottom: 1px solid #c4c4c4; line-height: 20px; white-space: nowrap; }
.toolbar { height: 39px; flex: none; display: flex; align-items: center; gap: 1px; border-bottom: 1px solid #bdbdbd; background: linear-gradient(#fbfbfb, #efefef); }
.grip { flex: none; width: 12px; height: 16px; background: radial-gradient(circle, #b0b0b0 1px, transparent 1px) 4px 0 / 3px 3px repeat-y, radial-gradient(circle, #b0b0b0 1px, transparent 1px) 7px 0 / 3px 3px repeat-y; }
.grip.wide { width: 16px; }
.tb { width: 32px; height: 32px; flex: none; display: flex; align-items: center; justify-content: center; position: relative; }
.tb svg { width: 24px; height: 24px; }
.tb.on { border: 1px solid #aaa; border-radius: 3px; background: #dedede; }
.tb.drop { width: 44px; justify-content: flex-start; padding-left: 4px; }
.tb.drop::after { content: ""; margin-left: 6px; border: 4px solid transparent; border-top: 5px solid #555; border-bottom: 0; }
.tb.small { width: 34px; padding-left: 0; }
.tb.small svg { width: 22px; }
.tb.small::after { margin-left: 1px; }
.tb:disabled { opacity: .35; }
.ext { width: 35px; flex: none; padding-right: 3px; text-align: right; font-size: 16px; font-weight: 700; line-height: 20px; }
.ext.grow { flex: 1; }
.ext.end { width: 16px; }
.ext.mid { width: 20px; }

.main { flex: 1; min-height: 0; display: grid; grid-template-columns: 231px minmax(0, 1fr) 196px; column-gap: 6px; }
.left { display: flex; flex-direction: column; min-height: 0; }
.dock { display: flex; flex-direction: column; min-height: 0; }
.dock h2 { flex: none; display: flex; align-items: center; justify-content: space-between; height: 20px; margin: 0; padding: 0 2px 0 4px; font-size: 11px; font-weight: 400; line-height: 20px; }
.dockctl { display: flex; gap: 3px; }
.dockctl svg { width: 11px; height: 11px; }
.tools { height: 30px; flex: none; display: flex; align-items: center; gap: 9px; padding-left: 8px; }
.tools svg { width: 16px; height: 16px; }
.tools i { width: 1px; height: 12px; margin: 0 -1px; background: #ccc; }
.tools .menu, .tools .sm { display: flex; align-items: center; }
.tools .menu::after { content: ""; margin-left: 5px; border: 4px solid transparent; border-top: 5px solid #555; border-bottom: 0; }
.tools .sm { position: relative; }
.tools .sm::after { content: ""; position: absolute; right: -2px; bottom: 0; border: 3px solid transparent; border-top: 3px solid #333; border-bottom: 0; }
.box { flex: 1; min-height: 0; display: flex; flex-direction: column; border: 1px solid #b3b3b3; background: #fff; }
.browser { flex: 215 1 0; }
.layers { flex: 185 1 0; }
.split { height: 6px; flex: none; }
.split::before { content: ""; display: block; width: 18px; height: 2px; margin: 2px auto; background: repeating-linear-gradient(90deg, #b5b5b5 0 1px, transparent 1px 3px); }

.tree { flex: 1; min-height: 0; overflow: hidden; white-space: nowrap; }
.browser .tree { padding-top: 1px; }
.tree li { height: 18px; display: flex; align-items: center; }
.tree li.sub { padding-left: 20px; }
.tree li > svg { width: 16px; height: 16px; margin-right: 6px; }
.tree li > i { width: 23px; flex: none; display: flex; padding-left: 8px; }
.tree li > i::before { content: ""; border: 4px solid transparent; border-left: 5px solid #555; border-right: 0; }
.tree li > i.open { padding-left: 6px; }
.tree li > i.open::before { border: 4px solid transparent; border-top: 5px solid #555; border-bottom: 0; }
.tree li > i.none::before { visibility: hidden; }
.hscroll { height: 14px; flex: none; display: flex; border-top: 1px solid #bbb; background: #e4e4e4; }
.hscroll button { width: 14px; border-right: 1px solid #bbb; background: #f6f6f6; display: grid; place-items: center; }
.hscroll button::before { content: ""; border: 4px solid transparent; border-right: 5px solid #444; border-left: 0; }
.hscroll span { width: 138px; border-right: 1px solid #bbb; background: linear-gradient(#fff, #f0f0f0); }

.layerlist { padding-top: 1px; font-weight: 700; }
.layerlist li { height: 18px; display: flex; align-items: center; gap: 6px; padding-left: 23px; padding-right: 5px; }
input[type=checkbox] { appearance: none; flex: none; width: 14px; height: 14px; border: 1px solid #b0b0b0; background: #fff; display: grid; place-items: center; }
input[type=checkbox]:checked::before { content: ""; width: 9px; height: 10px; background: #000; clip-path: polygon(0 45%, 25% 45%, 40% 68%, 80% 0, 100% 0, 50% 100%, 32% 100%); }
.sw { width: 16px; height: 16px; border: 1px solid #5b4a2a; }
.gold { background: #e3b336; }
.red { background: #c23a38; border-color: #6b2120; }
.tan { background: #bdb195; border-color: #888; }
.brown { background: #8f5030; border-color: #4c2a18; }
.dot { width: 8px; height: 8px; margin: 0 4px; border: 2px solid #5c7e9e; border-radius: 50%; background: #8ea3ae; }
.sel { background: #3399ff; color: #fff; text-decoration: underline; }
.off { color: #808080; font-style: italic; }
.chip { width: 15px; height: 16px; margin-left: auto; background: #f0f0f0; }

.zoomto { height: 88px; flex: none; }
.coordrow { display: flex; align-items: center; gap: 5px; margin: 8px 9px 6px 8px; }
.coordrow label { flex: 1; font-size: 10px; white-space: nowrap; }
.coordrow button { width: 24px; height: 23px; display: grid; place-items: center; border: 1px solid #b0b0b0; border-radius: 3px; background: linear-gradient(#fff, #ececec); }
input[type=text], select, .search { border: 1px solid #aaa; border-radius: 3px; background: #fff; }
#coord { height: 23px; margin: 0 9px; }

.canvas { min-width: 0; border: 1px solid #b3b3b3; border-top: 0; background: #fff; overflow: hidden; }
.canvas svg { width: 100%; height: 100%; }

.search { display: flex; align-items: center; gap: 7px; height: 21px; flex: none; padding: 0 8px; color: #888; }
.search input { flex: 1; min-width: 0; padding: 0; border: 0; outline: 0; background: none; }
.search input::placeholder { color: #999; opacity: 1; }
.right .search { margin: 1px 0; font-style: italic; }
.toolbox { flex-direction: row; }
.vscroll { width: 14px; flex: none; display: flex; flex-direction: column; border-left: 1px solid #bbb; background: #e4e4e4; }
.vscroll button { height: 14px; flex: none; display: grid; place-items: center; background: #f6f6f6; }
.vscroll .up::before { content: ""; border: 4px solid transparent; border-bottom: 5px solid #555; border-top: 0; }
.vscroll .down::before { content: ""; border: 4px solid transparent; border-top: 5px solid #555; border-bottom: 0; }
.vscroll span { flex: 1; margin-bottom: 16px; border: solid #bbb; border-width: 1px 0; background: linear-gradient(90deg, #fff, #f0f0f0); }

.status { height: 28px; flex: none; display: flex; align-items: center; padding-left: 4px; }
.status .locate { width: 200px; height: 22px; margin-right: 7px; }
.clip { flex: none; display: flex; justify-content: center; overflow: hidden; white-space: nowrap; }
.togg { width: 22px; justify-content: flex-start; margin-right: 10px; }
.coordl { width: 28px; margin-right: 3px; }
.status input[type=text], .status select { height: 21px; padding: 0 8px; }
.status .xy { width: 82px; }
.plain { flex: none; }
.ex { margin: 0 13px 0 4px; }
.scl { width: 6px; margin-right: 1px; }
#scale { width: 81px; appearance: none; padding: 0 2px; background: linear-gradient(45deg, transparent 50%, #555 50%) no-repeat 65px 8px / 4px 4px, linear-gradient(-45deg, transparent 50%, #555 50%) no-repeat 69px 8px / 4px 4px, linear-gradient(#bbb, #bbb) no-repeat 60px 0 / 1px 100%, #fff; }
#scale { background: conic-gradient(from -45deg at 50% 100%, #555 90deg, transparent 0) no-repeat 65px 8px / 8px 4px, linear-gradient(#bbb, #bbb) no-repeat 60px 0 / 1px 100%, #fff; background: conic-gradient(from 135deg at 50% 0, transparent 0) no-repeat, linear-gradient(to bottom left, #555 50%, transparent 50%) no-repeat 65px 8px / 4px 4px, linear-gradient(to bottom right, #555 50%, transparent 50%) no-repeat 69px 8px / 4px 4px, linear-gradient(#bbb, #bbb) no-repeat 60px 0 / 1px 100%, #fff; }
.lk { margin: 0 7px 0 10px; }
.mgl { width: 22px; margin-right: 3px; }
.spin { flex: none; display: flex; height: 21px; border: 1px solid #aaa; border-radius: 3px; background: #fff; }
.spin input[type=text] { flex: 1; min-width: 0; height: 19px; padding: 0 4px; border: 0; }
.spin b { width: 14px; border-left: 1px solid #bbb; display: flex; flex-direction: column; align-items: center; justify-content: center; gap: 3px; background: #f7f7f7; }
.spin b::before { content: ""; border: 4px solid transparent; border-bottom: 4px solid #555; border-top: 0; }
.spin b::after { content: ""; border: 4px solid transparent; border-top: 4px solid #555; border-bottom: 0; }
.mg { width: 87px; }
.rotl { width: 16px; margin: 0 9px 0 10px; }
.rt { width: 84px; margin-right: 6px; }
.rend { margin: 0 17px 0 4px; }
.cr { margin-right: 24px; }
.sizegrip { width: 10px; height: 10px; margin-left: auto; align-self: flex-end; background: radial-gradient(circle, #aaa 1px, transparent 1px) 0 0 / 3px 3px; clip-path: polygon(100% 0, 100% 100%, 0 100%); }

.context { position: absolute; left: 165px; top: 0; width: 230px; border: 1px solid #979797; border-top: 0; background: #fff; box-shadow: inset 0 1px #979797, 3px 3px 3px rgba(0,0,0,.5); }
.context button { display: flex; align-items: center; position: relative; width: 100%; height: 23px; padding-left: 27px; white-space: nowrap; }
.context button > svg, .tick { position: absolute; left: 6px; top: 4px; width: 16px; height: 16px; }
.tick { width: 14px; height: 14px; left: 7px; border: 1px solid #bbb; }
.context button:disabled { color: #888; }
.context button:disabled > svg { opacity: .4; }
.context .hot { background: #3399ff; color: #fff; }
.context .more::after { content: ""; margin-left: auto; margin-right: 5px; border: 4px solid transparent; border-left: 4px solid #666; border-right: 0; }
.context hr { height: 1px; margin: 0 4px 1px; border: 0; background: #c0c0c0; }
.pointer { position: absolute; left: 135px; top: 225px; width: 12px; height: 19px; }
```
